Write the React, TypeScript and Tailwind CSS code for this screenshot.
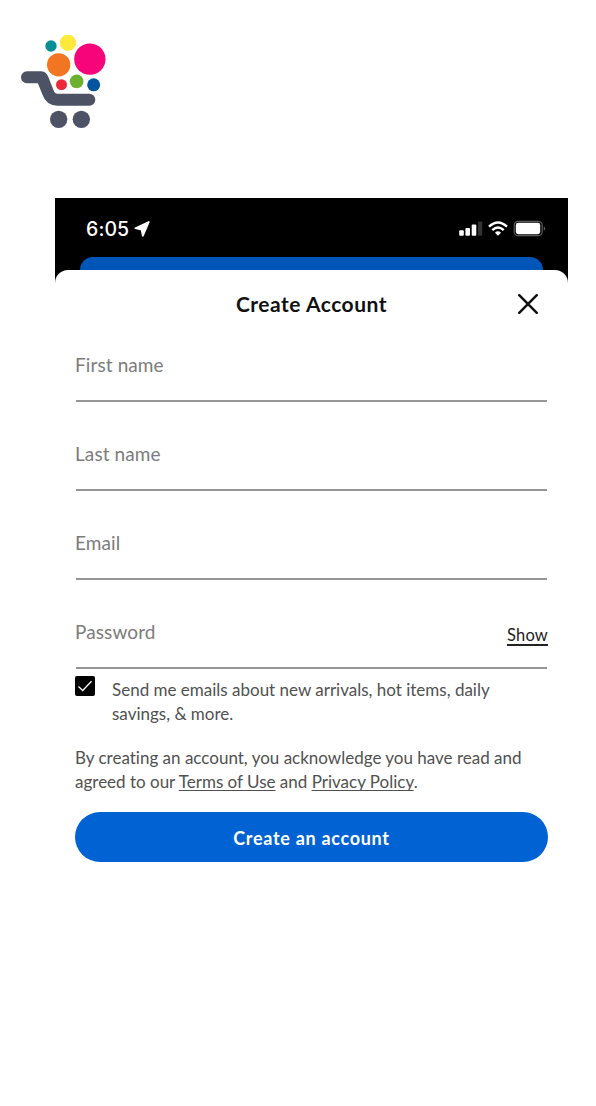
import type { ReactNode } from "react";

function CartLogo() {
  return (
    <svg className="h-[115px] w-[110px]" viewBox="0 0 330 345" aria-hidden="true">
      <circle cx="123" cy="63" r="17" fill="#068f95" />
      <circle cx="174" cy="53.500" r="24.500" fill="#fee93c" />
      <circle cx="239.500" cy="102.500" r="47" fill="#f8047a" />
      <circle cx="146" cy="119.500" r="35" fill="#f27622" />
      <circle cx="154.500" cy="179" r="16.500" fill="#ec2938" />
      <circle cx="200" cy="169" r="20.500" fill="#6cb02f" />
      <circle cx="251" cy="179.500" r="19.500" fill="#04549e" />
      <path
        d="M51 157H91Q96 157 98 162L113 200Q121 224 142 224H238"
        fill="none"
        stroke="#4d5365"
        strokeWidth="36"
        strokeLinecap="round"
        strokeLinejoin="round"
      />
      <circle cx="146" cy="283" r="26" fill="#4d5365" />
      <circle cx="214" cy="283" r="26" fill="#4d5365" />
    </svg>
  );
}

function StatusIcons() {
  return (
    <svg className="h-5 w-[90px]" viewBox="0 0 90 20" aria-hidden="true">
      <g fill="#fff">
        <rect x="0.200" y="11.300" width="4.600" height="5.400" rx="1" />
        <rect x="6.400" y="9" width="4.600" height="7.700" rx="1" />
        <rect x="12.700" y="5.500" width="4.600" height="11.200" rx="1" />
        <rect x="19" y="2.500" width="4.200" height="14.200" rx="1" fill="#333" />
      </g>
      <g fill="none" stroke="#fff" strokeWidth="2.500">
        <path d="M30 7.700Q39 -0.800 48 7.700" />
        <path d="M33.300 11.200Q39 5.800 44.700 11.200" />
      </g>
      <path d="M36 13.700Q39 10.900 42 13.700L39 16.800Z" fill="#fff" />
      <rect x="55.200" y="2.300" width="28" height="14.400" rx="4" fill="none" stroke="#5b5b5b" strokeWidth="1.200" />
      <rect x="56.800" y="3.800" width="24.400" height="11.400" rx="2.400" fill="#fff" />
      <path d="M84.800 7.500Q87.800 9.500 84.800 11.800Z" fill="#5b5b5b" />
    </svg>
  );
}

function Field({ label, action }: { label: string; action?: ReactNode }) {
  return (
    <div className="flex h-[89px] items-end justify-between border-b-2 border-[#969696] pb-[23px]">
      <span className="-ml-px text-[19px] leading-6 tracking-[0.1px] text-[#7c7c7c]">{label}</span>
      {action}
    </div>
  );
}

export default function App() {
  return (
    <main className="flex min-h-[1106px] w-[596px] flex-col bg-white font-['Lato',sans-serif] [font-variant-ligatures:none]">
      <div className="h-[198px] pt-[25px] pl-[10px]">
        <CartLogo />
      </div>
      <div className="ml-[55px] w-[513px]">
        <div className="flex h-[86px] flex-col bg-black">
          <div className="flex h-[59px] items-center justify-between pt-[3px] pr-[19px] pl-[31px]">
            <div className="flex items-center gap-[5px] text-white">
              <span className="font-['Inter',sans-serif] text-[19.500px] leading-6 font-medium tracking-[0.1px]">6:05</span>
              <svg className="h-4 w-4" viewBox="0 0 16 16" aria-hidden="true">
                <path
                  d="M14.800 1L1.300 7.200L7.600 8.500L8.800 14.800Z"
                  fill="#fff"
                  stroke="#fff"
                  strokeWidth="1.800"
                  strokeLinejoin="round"
                />
              </svg>
            </div>
            <StatusIcons />
          </div>
          <div className="mx-[25px] h-[13px] rounded-t-[13px] bg-[#0056b8]" />
          <div className="h-[14px] rounded-t-[13px] bg-white" />
        </div>
        <section className="px-5">
          <header className="-mt-[14px] grid h-[60px] grid-cols-[1fr_auto_1fr] items-center pt-[8px]">
            <span />
            <h1 className="text-[21px] leading-7 font-bold tracking-[0.500px] text-[#111]">Create Account</h1>
            <svg className="mr-[10px] h-5 w-5 justify-self-end" viewBox="0 0 20 20" aria-hidden="true">
              <path d="M1.200 1.200L18.800 18.800M18.800 1.200L1.200 18.800" stroke="#111" strokeWidth="2.500" strokeLinecap="round" />
            </svg>
          </header>
          <div className="-mt-[17px] mr-px ml-px">
            <Field label="First name" />
            <Field label="Last name" />
            <Field label="Email" />
            <Field
              label="Password"
              action={<button className="-mr-px -mb-[2px] border-b-2 border-[#222] text-[16.500px] leading-[18px] tracking-[0.2px] text-[#222]">Show</button>}
            />
          </div>
          <div className="flex pt-[7px]">
            <svg className="mr-[17px] h-5 w-5 shrink-0" viewBox="0 0 20 20" aria-hidden="true">
              <rect width="20" height="20" rx="2" fill="#000" />
              <path d="M3.500 10.500L7.700 14.500L16.500 5.300" fill="none" stroke="#fff" strokeWidth="1.300" />
            </svg>
            <p className="pt-[2px] text-[17px] leading-6 whitespace-nowrap text-[#515151]">
              Send me emails about new arrivals, hot items, daily
              <br />
              savings, &amp; more.
            </p>
          </div>
          <p className="mt-5 text-[17px] leading-6 whitespace-nowrap text-[#515151]">
            By creating an account, you acknowledge you have read and
            <br />
            agreed to our <a className="underline underline-offset-[2px] [text-decoration-skip-ink:none]">Terms of Use</a> and{" "}
            <a className="underline underline-offset-[2px] [text-decoration-skip-ink:none]">Privacy Policy</a>.
          </p>
          <button className="mt-[18px] h-[50px] w-full rounded-full bg-[#0062d3] pt-[2px] text-[18px] font-bold tracking-[0.700px] text-white">
            Create an account
          </button>
        </section>
      </div>
    </main>
  );
}
